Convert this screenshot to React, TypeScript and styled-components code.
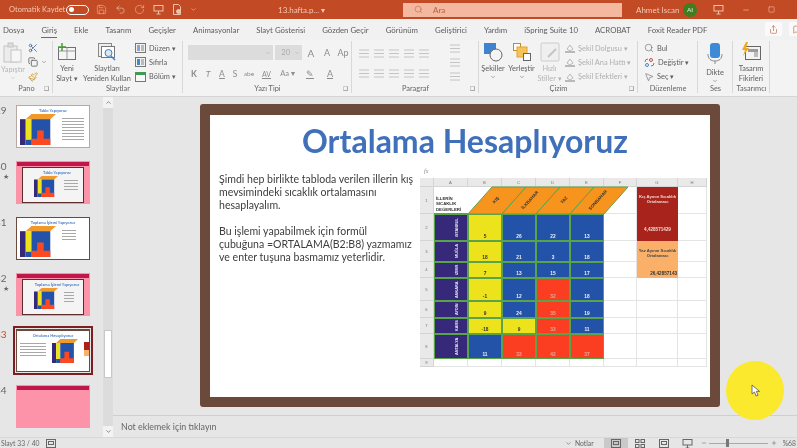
import styled, { createGlobalStyle } from "styled-components";
import {
  ChevronDown,
  ChevronUp,
  Copy,
  Minus,
  MessageSquare,
  MousePointer2,
  Paintbrush,
  Plus,
  RotateCw,
  Save,
  Scissors,
  Search,
  Share,
  Square,
  Undo2,
} from "lucide-react";

const GlobalStyle = createGlobalStyle`
  html, body { margin: 0; padding: 0; background: #e6e6e6; overflow: hidden; }
  * { box-sizing: border-box; }
`;

const Page = styled.div`
  position: relative;
  width: 797px;
  height: 448px;
  display: flex;
  flex-direction: column;
  overflow: hidden;
  font-family: Lato, "Noto Sans", sans-serif;
  color: #555;
  background: #e6e6e6;
  filter: blur(0.4px);
`;

/* ---------- title bar ---------- */
const TitleBar = styled.div`
  height: 19px;
  flex-shrink: 0;
  background: #c24b25;
  color: #f3c9b6;
  font-size: 8px;
  display: flex;
  align-items: center;
  padding-left: 9px;
  white-space: nowrap;
`;
const AutoSave = styled.span`
  width: 57px;
  font-size: 7.5px;
`;
const Toggle = styled.span`
  width: 23px;
  height: 10px;
  border: 1px solid #fff;
  border-radius: 6px;
  display: flex;
  align-items: center;
  padding-left: 2px;
  margin-right: 7px;
  &::before {
    content: "";
    width: 5px;
    height: 5px;
    border-radius: 50%;
    background: #fff;
  }
`;
const QuickIcons = styled.div`
  display: flex;
  align-items: center;
  gap: 8px;
  width: 182px;
  color: #f0c0a8;
`;
const FileName = styled.span`
  width: 125px;
`;
const SearchBox = styled.div`
  width: 219px;
  height: 14px;
  background: #f3b89f;
  color: #b5603f;
  display: flex;
  align-items: center;
  gap: 10px;
  padding-left: 11px;
`;
const UserName = styled.span`
  margin-left: 14px;
  width: 47px;
`;
const Avatar = styled.span`
  width: 14px;
  height: 14px;
  border-radius: 50%;
  background: #3f7d1f;
  color: #e5eed8;
  font-size: 6.5px;
  display: flex;
  align-items: center;
  justify-content: center;
  margin-right: 16px;
`;
const WindowIcons = styled.div`
  display: flex;
  align-items: center;
  gap: 18px;
  color: #f0c0a8;
`;

/* ---------- tabs ---------- */
const TabBar = styled.div`
  height: 21px;
  flex-shrink: 0;
  background: #f1f1f1;
  display: flex;
  align-items: center;
  gap: 17px;
  padding-left: 3px;
  position: relative;
`;
const Tab = styled.span<{ $active?: boolean }>`
  font-size: 7.8px;
  color: #5c5c5c;
  white-space: nowrap;
  padding: 3px 0 2px;
  border-bottom: 1px solid ${(p) => (p.$active ? "#c24b25" : "transparent")};
`;
const TabActions = styled.div`
  position: absolute;
  right: -9px;
  top: 3px;
  display: flex;
  gap: 7px;
  color: #c8775a;
`;
const TabAction = styled.span`
  width: 17px;
  height: 14px;
  background: #fafafa;
  display: flex;
  align-items: center;
  justify-content: center;
`;

/* ---------- ribbon ---------- */
const Ribbon = styled.div`
  height: 57px;
  flex-shrink: 0;
  background: #f3f3f3;
  border-bottom: 1px solid #d5d5d5;
  display: flex;
`;
const Group = styled.div<{ $w: number }>`
  width: ${(p) => p.$w}px;
  flex-shrink: 0;
  display: flex;
  flex-direction: column;
  position: relative;
  &::after {
    content: "";
    position: absolute;
    right: 0;
    top: 1px;
    bottom: 3px;
    width: 1px;
    background: #d8d8d8;
  }
`;
const GroupBody = styled.div`
  flex: 1;
  display: flex;
  min-height: 0;
`;
const GroupLabel = styled.div`
  height: 13px;
  font-size: 7.4px;
  color: #666;
  text-align: center;
  line-height: 11px;
  position: relative;
`;
const Launcher = styled.span`
  position: absolute;
  right: 4px;
  top: 3px;
  width: 5px;
  height: 5px;
  border: 1px solid #aaa;
  border-top-color: #ccc;
  border-left-color: #ccc;
`;
const BigButton = styled.div<{ $w: number; $off?: boolean }>`
  width: ${(p) => p.$w}px;
  flex-shrink: 0;
  display: flex;
  flex-direction: column;
  align-items: center;
  padding-top: 2px;
  font-size: 7.4px;
  line-height: 9.5px;
  text-align: center;
  color: ${(p) => (p.$off ? "#b5b5b5" : "#606060")};
  white-space: nowrap;
  svg {
    flex-shrink: 0;
  }
`;
const BigLabel = styled.span`
  margin-top: 2px;
`;
const SmallColumn = styled.div<{ $w?: number; $pad?: number }>`
  width: ${(p) => (p.$w ? `${p.$w}px` : "auto")};
  padding-left: ${(p) => p.$pad ?? 0}px;
  padding-top: 2px;
  display: flex;
  flex-direction: column;
  gap: 2px;
`;
const SmallRow = styled.div<{ $off?: boolean }>`
  height: 13px;
  display: flex;
  align-items: center;
  gap: 3px;
  font-size: 7.4px;
  white-space: nowrap;
  color: ${(p) => (p.$off ? "#b0b0b0" : "#606060")};
`;
const FontColumn = styled.div`
  display: flex;
  flex-direction: column;
  padding: 5px 0 0 5px;
  gap: 6px;
`;
const FontRow = styled.div`
  display: flex;
  align-items: center;
  gap: 2px;
  height: 15px;
  color: #8c8c8c;
  font-size: 8px;
`;
const Select = styled.div<{ $w: number }>`
  width: ${(p) => p.$w}px;
  height: 15px;
  background: #dcdcdc;
  color: #aaa;
  font-size: 7.5px;
  display: flex;
  align-items: center;
  justify-content: flex-end;
  gap: 4px;
  padding-right: 2px;
`;
const Glyph = styled.span<{ $w: number; $b?: boolean; $i?: boolean; $u?: boolean; $size?: number }>`
  width: ${(p) => p.$w}px;
  text-align: center;
  font-weight: ${(p) => (p.$b ? 700 : 400)};
  font-style: ${(p) => (p.$i ? "italic" : "normal")};
  text-decoration: ${(p) => (p.$u ? "underline" : "none")};
  font-size: ${(p) => p.$size ?? 8.5}px;
`;
const ParagraphColumn = styled.div`
  width: 86px;
  padding: 8px 0 0 7px;
  display: flex;
  flex-direction: column;
  gap: 9px;
`;
const IconLine = styled.div`
  display: flex;
  gap: 5px;
  height: 11px;
  align-items: center;
`;

/* ---------- main area ---------- */
const Main = styled.div`
  flex: 1;
  display: flex;
  min-height: 0;
`;
const ThumbPane = styled.div`
  width: 113px;
  flex-shrink: 0;
  display: flex;
  background: #e6e6e6;
`;
const ThumbList = styled.div`
  width: 103px;
  padding-top: 8px;
  display: flex;
  flex-direction: column;
  gap: 13px;
`;
const ThumbRow = styled.div`
  height: 43px;
  display: flex;
`;
const ThumbNumber = styled.div<{ $current?: boolean }>`
  width: 16px;
  flex-shrink: 0;
  overflow: hidden;
  font-size: 10px;
  line-height: 11px;
  color: ${(p) => (p.$current ? "#c24b25" : "#666")};
  white-space: nowrap;
  text-indent: -5px;
`;
const Star = styled.div`
  font-size: 7px;
  line-height: 8px;
  text-indent: 3px;
`;
const Thumb = styled.div<{ $bg: string; $border: string; $current?: boolean }>`
  width: 74px;
  height: 43px;
  flex-shrink: 0;
  background: ${(p) => p.$bg};
  border: 1px solid ${(p) => p.$border};
  border-top-width: ${(p) => (p.$current ? 2 : 1)}px;
  display: flex;
  flex-direction: column;
  align-items: center;
  overflow: hidden;
  outline: ${(p) => (p.$current ? "2px solid #7d1f22" : "none")};
  outline-offset: 1px;
`;
const PinkThumb = styled(Thumb)`
  justify-content: flex-start;
  gap: 1px;
`;
const InnerScreen = styled.div`
  width: 62px;
  height: 36px;
  background: #f4f4f4;
  border: 1px solid #5d2d2d;
  display: flex;
  flex-direction: column;
  align-items: center;
  padding-left: 8px;
`;
const ThumbTitle = styled.div`
  font-size: 4px;
  font-weight: 700;
  color: #4a7cc4;
  padding-top: 2px;
  line-height: 5px;
  white-space: nowrap;
`;
const ThumbBand = styled.div`
  width: 100%;
  height: 4px;
  flex-shrink: 0;
  background: #c2154a;
`;
const ThumbContent = styled.div`
  width: 100%;
  display: flex;
  align-items: flex-start;
  gap: 6px;
  padding: 1px 3px 0 3px;
`;
const ThumbLines = styled.div<{ $w: number; $h: number }>`
  width: ${(p) => p.$w}px;
  height: ${(p) => p.$h}px;
  margin-top: 4px;
  flex-shrink: 0;
  background: repeating-linear-gradient(#a8a8a8 0 1px, transparent 1px 3px);
`;
const ThumbSideBar = styled.div`
  width: 6px;
  height: 14px;
  margin-top: 3px;
  flex-shrink: 0;
  background: linear-gradient(#a8231c 55%, #fbb06a 55%);
`;
const ScrollBar = styled.div`
  width: 10px;
  background: #dcdcdc;
  display: flex;
  flex-direction: column;
  align-items: center;
  color: #444;
`;
const ScrollEnd = styled.div`
  width: 10px;
  height: 11px;
  background: #f3f3f3;
  display: flex;
  align-items: center;
  justify-content: center;
`;
const ScrollThumb = styled.div`
  width: 8px;
  height: 48px;
  background: #fff;
  border: 1px solid #c8c8c8;
  margin-top: auto;
  margin-bottom: 48px;
`;
const Workspace = styled.div`
  flex: 1;
  display: flex;
  flex-direction: column;
  min-width: 0;
`;
const Stage = styled.div`
  flex: 1;
  padding: 7px 0 0 87px;
`;
const Slide = styled.div`
  width: 520px;
  height: 303px;
  background: #fff;
  border: 10px solid #6b4a3c;
  border-top-width: 11px;
  border-radius: 3px;
  display: flex;
  flex-direction: column;
  overflow: hidden;
`;
const SlideTitle = styled.div`
  font-size: 32px;
  font-weight: 700;
  line-height: 34px;
  color: #3f70b9;
  text-align: center;
  padding: 9px 0 0 10px;
  white-space: nowrap;
`;
const SlideBody = styled.div`
  display: flex;
  padding: 9px 0 0 9px;
`;
const SlideText = styled.div`
  width: 201px;
  padding-top: 6px;
  font-size: 10.55px;
  line-height: 12.8px;
  color: #3d3d3d;
  flex-shrink: 0;
`;
const Paragraph = styled.p`
  margin: 0 0 14px;
  white-space: nowrap;
`;

/* ---------- embedded spreadsheet ---------- */
const SheetWrap = styled.div`
  display: flex;
  flex-direction: column;
  width: 287px;
`;
const Fx = styled.div`
  height: 11px;
  font-size: 6px;
  font-style: italic;
  color: #888;
  padding-left: 4px;
  line-height: 9px;
  font-family: "Liberation Serif", serif;
`;
const Sheet = styled.div`
  position: relative;
  display: grid;
  grid-template-columns: 14px 34px 34px 34px 34px 34px 33px 41px 29px;
  grid-template-rows: 9px 27px 27px 21px 16px 23px 17px 16px 25px 8px;
  font-family: "Liberation Sans", Arial, sans-serif;
  font-size: 4.2px;
`;
const HeadCell = styled.div`
  background: #e9e9e9;
  border-right: 1px solid #d4d4d4;
  border-bottom: 1px solid #d4d4d4;
  color: #777;
  display: flex;
  align-items: center;
  justify-content: center;
`;
const Blank = styled.div`
  border-right: 1px solid #e4e4e4;
  border-bottom: 1px solid #e4e4e4;
`;
const TitleCell = styled.div`
  border-bottom: 1px solid #5aa34a;
  font-weight: 700;
  font-size: 4.3px;
  line-height: 5.5px;
  color: #333;
  display: flex;
  align-items: flex-end;
  padding: 0 0 1px 2px;
`;
const CityCell = styled.div`
  background: #37297a;
  border: 1px solid #5aa34a;
  color: #e8e8f5;
  font-weight: 700;
  font-size: 3.8px;
  display: flex;
  align-items: flex-end;
  justify-content: center;
  writing-mode: vertical-rl;
  transform: rotate(180deg);
  padding-left: 8px;
  white-space: nowrap;
`;
const ValueCell = styled.div<{ $tone: "yellow" | "blue" | "red" }>`
  background: ${(p) => (p.$tone === "yellow" ? "#ece31c" : p.$tone === "blue" ? "#2353a8" : "#fb3e22")};
  color: ${(p) => (p.$tone === "yellow" ? "#333" : p.$tone === "blue" ? "#f1f1f1" : "#e8a898")};
  border: 1px solid #5aa34a;
  font-weight: 700;
  font-size: 4.8px;
  display: flex;
  align-items: flex-end;
  justify-content: center;
  padding-bottom: 1px;
`;
const AverageCell = styled.div<{ $bg: string; $fg: string; $align: string; $justify: string }>`
  background: ${(p) => p.$bg};
  color: ${(p) => p.$fg};
  font-weight: 700;
  font-size: 4.6px;
  line-height: 5.4px;
  text-align: center;
  white-space: nowrap;
  display: flex;
  align-items: ${(p) => p.$align};
  justify-content: ${(p) => p.$justify};
  padding: 7px 1px 2px;
`;
const AverageLabel = styled.span`
  font-size: 4.2px;
`;
const HeaderOverlay = styled.svg`
  position: absolute;
  left: 48px;
  top: 9px;
  width: 170px;
  height: 27px;
  overflow: visible;
`;

/* ---------- notes + status ---------- */
const Notes = styled.div`
  height: 22px;
  flex-shrink: 0;
  border-top: 1px solid #cfcfcf;
  font-size: 8.9px;
  color: #666;
  padding-left: 8px;
  display: flex;
  align-items: center;
`;
const StatusBar = styled.div`
  height: 11px;
  flex-shrink: 0;
  background: #e6e6e6;
  border-top: 1px solid #d8d8d8;
  display: flex;
  align-items: center;
  font-size: 6.8px;
  color: #666;
  padding-left: 1px;
`;
const StatusLeft = styled.span`
  width: 45px;
  white-space: nowrap;
`;
const StatusRight = styled.div`
  margin-left: auto;
  display: flex;
  align-items: center;
  height: 100%;
`;
const NotesToggle = styled.span`
  display: flex;
  align-items: center;
  gap: 3px;
  margin-right: 10px;
`;
const ViewButton = styled.span<{ $active?: boolean }>`
  width: 24px;
  height: 100%;
  background: ${(p) => (p.$active ? "#c9c9c9" : "transparent")};
  display: flex;
  align-items: center;
  justify-content: center;
`;
const Zoomer = styled.div`
  display: flex;
  align-items: center;
  margin-left: 1px;
  gap: 2px;
  padding-right: 1px;
`;
const ZoomTrack = styled.span`
  width: 59px;
  height: 1px;
  background: #aaa;
  display: flex;
  align-items: center;
  justify-content: center;
  margin-right: 1px;
  &::before {
    content: "";
    width: 3px;
    height: 8px;
    background: #777;
    margin-right: 22px;
  }
`;
const ZoomValue = styled.span`
  margin-left: 4px;
  white-space: nowrap;
`;
const CursorSpot = styled.div`
  position: absolute;
  left: 726px;
  top: 361px;
  width: 58px;
  height: 59px;
  border-radius: 50%;
  background: #fbe92e;
  display: flex;
  align-items: center;
  justify-content: center;
`;

/* ---------- icons ---------- */
const ClipboardIcon = () => (
  <svg width="20" height="21" viewBox="0 0 20 21" fill="none">
    <rect x="1" y="4" width="13" height="16" fill="#ececec" stroke="#c4c4c4" />
    <rect x="5" y="1" width="5" height="4" fill="#ddd" stroke="#c4c4c4" />
    <rect x="8" y="8" width="10" height="12" fill="#f6f6f6" stroke="#c4c4c4" />
  </svg>
);
const NewSlideIcon = () => (
  <svg width="20" height="20" viewBox="0 0 20 20" fill="none">
    <rect x="1.500" y="5.500" width="17" height="12" fill="#f5f5f5" stroke="#707070" />
    <path d="M1.500 9h17M10 5.500v12" stroke="#999" />
    <path d="M5 1v8M1 5h8" stroke="#4c9a3c" strokeWidth="1.500" />
  </svg>
);
const ReuseIcon = () => (
  <svg width="21" height="20" viewBox="0 0 21 20" fill="none">
    <rect x="1.500" y="1.500" width="13" height="13" fill="#eee" stroke="#888" />
    <rect x="4.500" y="4.500" width="13" height="11" fill="#fff" stroke="#777" />
    <circle cx="11.500" cy="11" r="3.500" fill="#dbe9f7" stroke="#3c7fbf" />
    <path d="M14 14l4 4" stroke="#3c7fbf" strokeWidth="1.500" />
  </svg>
);
const LayoutIcon = ({ accent }: { accent: string }) => (
  <svg width="11" height="10" viewBox="0 0 11 10" fill="none">
    <rect x=".5" y=".5" width="10" height="9" fill="#f2f2f2" stroke="#777" />
    <rect x="2" y="2" width="3" height="6" fill={accent} />
    <rect x="6" y="2" width="3" height="6" fill="#bbb" />
  </svg>
);
const SectionIcon = () => (
  <svg width="11" height="10" viewBox="0 0 11 10" fill="none">
    <rect x=".5" y=".5" width="10" height="9" fill="#f8f8f8" stroke="#777" />
    <rect x="0" y="0" width="11" height="3" fill="#3f9a55" />
  </svg>
);
const ListIcon = ({ w = 10 }: { w?: number }) => (
  <svg width={w} height="9" viewBox="0 0 10 9" stroke="#c4c4c4" fill="none">
    <path d="M0 1h10M0 4.500h10M0 8h10" />
  </svg>
);
const ShapesIcon = () => (
  <svg width="20" height="20" viewBox="0 0 20 20" fill="none">
    <rect x="1" y="1" width="12" height="11" fill="#3f82d0" />
    <circle cx="13" cy="13" r="6" fill="#f4f4f4" stroke="#666" />
  </svg>
);
const ArrangeIcon = () => (
  <svg width="20" height="20" viewBox="0 0 20 20" fill="none">
    <rect x="1.500" y="1.500" width="7" height="7" fill="#fff" stroke="#c78a1d" />
    <rect x="5" y="5" width="10" height="10" fill="#f6c25a" stroke="#e2a431" />
    <rect x="11.500" y="11.500" width="7" height="7" fill="#fff" stroke="#666" />
  </svg>
);
const QuickStyleIcon = () => (
  <svg width="20" height="20" viewBox="0 0 20 20" fill="none">
    <rect x="1" y="1" width="18" height="18" rx="1" fill="#efefef" stroke="#cccccc" />
    <path d="M8 15l8-8" stroke="#c4c4c4" strokeWidth="2" />
  </svg>
);
const FillIcon = ({ color }: { color: string }) => (
  <svg width="10" height="10" viewBox="0 0 10 10" fill="none">
    <path d="M2 6l3-4 3 4-3 2z" stroke={color} fill="none" />
    <rect x="0" y="8" width="10" height="2" fill={color} />
  </svg>
);
const ReplaceIcon = () => (
  <svg width="11" height="11" viewBox="0 0 11 11" fill="none">
    <path d="M1 5a3 3 0 0 1 3-3" stroke="#4b86c6" />
    <path d="M10 6a3 3 0 0 1-3 3" stroke="#4b86c6" />
    <circle cx="7" cy="3" r="1.500" stroke="#c0504d" />
    <circle cx="3" cy="8" r="1.500" stroke="#4b86c6" />
  </svg>
);
const MicIcon = () => (
  <svg width="18" height="24" viewBox="0 0 18 24" fill="none">
    <rect x="4" y="1" width="10" height="15" rx="3" fill="#3d8bd8" />
    <path d="M2 12c0 5 3 7 7 7s7-2 7-7M9 19v3" stroke="#888" />
  </svg>
);
const IdeasIcon = () => (
  <svg width="22" height="20" viewBox="0 0 22 20" fill="none">
    <rect x="5.500" y="4.500" width="15" height="13" fill="#f3f3f3" stroke="#666" />
    <rect x="8" y="7" width="10" height="3" fill="#9a9a9a" />
    <rect x="14" y="10" width="4" height="5" fill="#bcbcbc" />
    <path d="M6 0L2 8h3l-2 6 6-8H6l2-6z" fill="#f0a81e" />
  </svg>
);
const PresentIcon = () => (
  <svg width="11" height="11" viewBox="0 0 11 11" fill="none" stroke="currentColor">
    <rect x="1" y="1.500" width="9" height="5.500" />
    <path d="M5.500 7v3M3.500 10h4" />
  </svg>
);
const PageIcon = () => (
  <svg width="10" height="11" viewBox="0 0 10 11" fill="none" stroke="currentColor">
    <path d="M1.500.500h5l2 2v8h-7z" />
    <circle cx="6.500" cy="7.500" r="2" fill="currentColor" />
  </svg>
);
const GridViewIcon = () => (
  <svg width="10" height="9" viewBox="0 0 10 9" fill="none" stroke="#666">
    <rect x=".5" y=".5" width="3.500" height="3" />
    <rect x="6" y=".5" width="3.500" height="3" />
    <rect x=".5" y="5.500" width="3.500" height="3" />
    <rect x="6" y="5.500" width="3.500" height="3" />
  </svg>
);
const NormalViewIcon = () => (
  <svg width="10" height="9" viewBox="0 0 10 9" fill="none" stroke="#666">
    <rect x=".5" y=".5" width="9" height="8" />
    <rect x="2.500" y="2.500" width="5" height="3" />
  </svg>
);
const MiniTable = ({ w, h }: { w: number; h: number }) => (
  <svg width={w} height={h} viewBox="0 0 44 30" preserveAspectRatio="none" style={{ flexShrink: 0 }}>
    <path d="M7 5L14 0h30l-7 5z" fill="#ef9a2c" />
    <rect x="0" y="5" width="7" height="25" fill="#37297a" />
    <rect x="7" y="5" width="7" height="25" fill="#ece31c" />
    <rect x="14" y="5" width="23" height="25" fill="#2353a8" />
    <rect x="7" y="25" width="7" height="5" fill="#2353a8" />
    <path d="M14 30v-6h7v-8h8v8h8v6z" fill="#fb4a22" />
  </svg>
);

/* ---------- data ---------- */
const columns = ["A", "B", "C", "D", "E", "F", "G", "H"];
type Tone = "yellow" | "blue" | "red";
const rows: { city: string; values: [string, Tone][] }[] = [
  { city: "İSTANBUL", values: [["5", "yellow"], ["26", "blue"], ["22", "blue"], ["13", "blue"]] },
  { city: "MUĞLA", values: [["18", "yellow"], ["21", "blue"], ["3", "blue"], ["18", "blue"]] },
  { city: "İZMİR", values: [["7", "yellow"], ["13", "blue"], ["15", "blue"], ["17", "blue"]] },
  { city: "ANKARA", values: [["-1", "yellow"], ["12", "blue"], ["32", "red"], ["18", "blue"]] },
  { city: "AYDIN", values: [["9", "yellow"], ["24", "blue"], ["35", "red"], ["19", "blue"]] },
  { city: "KARS", values: [["-18", "yellow"], ["9", "yellow"], ["33", "red"], ["11", "blue"]] },
  { city: "ANTALYA", values: [["11", "blue"], ["33", "red"], ["42", "red"], ["37", "red"]] },
];
const seasons = ["KIŞ", "İLKBAHAR", "YAZ", "SONBAHAR"];
const tabs = [
  "Dosya", "Giriş", "Ekle", "Tasarım", "Geçişler", "Animasyonlar", "Slayt Gösterisi",
  "Gözden Geçir", "Görünüm", "Geliştirici", "Yardım", "iSpring Suite 10", "ACROBAT", "Foxit Reader PDF",
];
type ThumbInfo = {
  n: string;
  title?: string;
  pink?: boolean;
  current?: boolean;
  empty?: boolean;
  framed?: boolean;
  lines?: number;
};
const thumbs: ThumbInfo[] = [
  { n: "29", title: "Tablo Yapıyoruz", lines: 22 },
  { n: "30", title: "Tablo Yapıyoruz", pink: true, lines: 14 },
  { n: "31", title: "Toplama İşlemi Yapıyoruz", framed: true, lines: 14 },
  { n: "32", title: "Toplama İşlemi Yapıyoruz", pink: true, lines: 10 },
  { n: "33", title: "Ortalama Hesaplıyoruz", current: true },
  { n: "34", empty: true },
];

const Thumbnail = ({ t }: { t: ThumbInfo }) => {
  if (t.empty) {
    return (
      <Thumb $bg="#fc93a8" $border="#fc93a8">
        <ThumbBand />
      </Thumb>
    );
  }
  if (t.pink) {
    return (
      <PinkThumb $bg="#fc93a8" $border="#fc93a8">
        <ThumbBand />
        <InnerScreen>
          <ThumbTitle>{t.title}</ThumbTitle>
          <ThumbContent>
            <MiniTable w={24} h={21} />
            <ThumbLines $w={t.lines ?? 10} $h={10} />
          </ThumbContent>
        </InnerScreen>
      </PinkThumb>
    );
  }
  if (t.current) {
    return (
      <Thumb $bg="#fff" $border="#6b4a3c" $current>
        <ThumbTitle>{t.title}</ThumbTitle>
        <ThumbContent>
          <ThumbLines $w={26} $h={14} />
          <MiniTable w={26} h={24} />
          <ThumbSideBar />
        </ThumbContent>
      </Thumb>
    );
  }
  return (
    <Thumb $bg="#fff" $border={t.framed ? "#6b4a3c" : "#b8a8a0"}>
      <ThumbTitle>{t.title}</ThumbTitle>
      <ThumbContent>
        <MiniTable w={36} h={31} />
        <ThumbLines $w={t.lines ?? 20} $h={t.framed ? 10 : 24} />
      </ThumbContent>
    </Thumb>
  );
};

const RowCells = ({ row, index }: { row: (typeof rows)[number]; index: number }) => (
  <>
    <HeadCell>{index + 2}</HeadCell>
    <CityCell>{row.city}</CityCell>
    {row.values.map(([value, tone], i) => (
      <ValueCell key={i} $tone={tone}>
        {value}
      </ValueCell>
    ))}
    <Blank />
    {index === 0 && (
      <AverageCell $bg="#a8231c" $fg="#f2d6cf" $align="center" $justify="center">
        4,428571429
      </AverageCell>
    )}
    {index === 1 && (
      <AverageCell $bg="#fbb06a" $fg="#444" $align="flex-start" $justify="center">
        <AverageLabel>
          Yaz Ayının Sıcaklık
          <br />
          Ortalaması
        </AverageLabel>
      </AverageCell>
    )}
    {index === 2 && (
      <AverageCell $bg="#fbb06a" $fg="#333" $align="flex-end" $justify="flex-end">
        26,42857143
      </AverageCell>
    )}
    {index > 2 && <Blank />}
    <Blank />
  </>
);

const App = () => {
  return (
    <Page>
      <GlobalStyle />
      <TitleBar>
        <AutoSave>Otomatik Kaydet</AutoSave>
        <Toggle />
        <QuickIcons>
          <Save size={11} strokeWidth={1.2} />
          <Undo2 size={11} strokeWidth={1.4} />
          <RotateCw size={11} strokeWidth={1.2} />
          <PresentIcon />
          <PageIcon />
          <ChevronDown size={7} />
        </QuickIcons>
        <FileName>13.hafta.p... ▾</FileName>
        <SearchBox>
          <Search size={9} strokeWidth={1.4} />
          <span>Ara</span>
        </SearchBox>
        <UserName>Ahmet Iscan</UserName>
        <Avatar>AI</Avatar>
        <WindowIcons>
          <PresentIcon />
          <Minus size={8} />
          <Square size={7} />
        </WindowIcons>
      </TitleBar>

      <TabBar>
        {tabs.map((tab) => (
          <Tab key={tab} $active={tab === "Giriş"}>
            {tab}
          </Tab>
        ))}
        <TabActions>
          <TabAction>
            <Share size={9} />
          </TabAction>
          <TabAction>
            <MessageSquare size={9} />
          </TabAction>
        </TabActions>
      </TabBar>

      <Ribbon>
        <Group $w={53}>
          <GroupBody>
            <BigButton $w={26} $off>
              <ClipboardIcon />
              <BigLabel>Yapıştır</BigLabel>
              <ChevronDown size={6} />
            </BigButton>
            <SmallColumn $pad={2}>
              <SmallRow>
                <Scissors size={10} color="#4a6a9a" />
              </SmallRow>
              <SmallRow>
                <Copy size={10} />
                <ChevronDown size={6} />
              </SmallRow>
              <SmallRow>
                <Paintbrush size={10} color="#d29a2a" />
              </SmallRow>
            </SmallColumn>
          </GroupBody>
          <GroupLabel>
            Pano
            <Launcher />
          </GroupLabel>
        </Group>

        <Group $w={130}>
          <GroupBody>
            <BigButton $w={28}>
              <NewSlideIcon />
              <BigLabel>
                Yeni
                <br />
                Slayt ▾
              </BigLabel>
            </BigButton>
            <BigButton $w={52}>
              <ReuseIcon />
              <BigLabel>
                Slaytları
                <br />
                Yeniden Kullan
              </BigLabel>
            </BigButton>
            <SmallColumn $pad={2}>
              <SmallRow>
                <LayoutIcon accent="#8aa6c8" />
                Düzen ▾
              </SmallRow>
              <SmallRow>
                <LayoutIcon accent="#3c8ecb" />
                Sıfırla
              </SmallRow>
              <SmallRow>
                <SectionIcon />
                Bölüm ▾
              </SmallRow>
            </SmallColumn>
          </GroupBody>
          <GroupLabel>Slaytlar</GroupLabel>
        </Group>

        <Group $w={169}>
          <GroupBody>
            <FontColumn>
              <FontRow>
                <Select $w={85}>
                  <ChevronDown size={6} />
                </Select>
                <Select $w={27}>
                  20 <ChevronDown size={6} />
                </Select>
                <Glyph $w={14} $size={10}>
                  A
                </Glyph>
                <Glyph $w={14} $size={9}>
                  A
                </Glyph>
                <Glyph $w={14} $size={9}>
                  Ap
                </Glyph>
              </FontRow>
              <FontRow>
                <Glyph $w={12} $b>
                  K
                </Glyph>
                <Glyph $w={12} $i>
                  T
                </Glyph>
                <Glyph $w={12} $u>
                  A
                </Glyph>
                <Glyph $w={10}>S</Glyph>
                <Glyph $w={14} $size={6.5}>
                  abe
                </Glyph>
                <Glyph $w={17} $size={7} $u>
                  AV
                </Glyph>
                <Glyph $w={21} $size={7.5}>
                  Aa ▾
                </Glyph>
                <Glyph $w={20} $size={9} $u>
                  ✎
                </Glyph>
                <Glyph $w={16} $size={9} $u>
                  A
                </Glyph>
              </FontRow>
            </FontColumn>
          </GroupBody>
          <GroupLabel>
            Yazı Tipi
            <Launcher />
          </GroupLabel>
        </Group>

        <Group $w={127}>
          <GroupBody>
            <ParagraphColumn>
              <IconLine>
                <ListIcon />
                <ListIcon />
                <ListIcon />
                <ListIcon />
                <ListIcon />
              </IconLine>
              <IconLine>
                <ListIcon />
                <ListIcon />
                <ListIcon />
                <ListIcon />
                <ListIcon />
              </IconLine>
            </ParagraphColumn>
            <SmallColumn $pad={12}>
              <SmallRow $off>
                <ListIcon />
              </SmallRow>
              <SmallRow $off>
                <ListIcon />
              </SmallRow>
              <SmallRow $off>
                <ListIcon />
              </SmallRow>
            </SmallColumn>
          </GroupBody>
          <GroupLabel>
            Paragraf
            <Launcher />
          </GroupLabel>
        </Group>

        <Group $w={159}>
          <GroupBody>
            <BigButton $w={28}>
              <ShapesIcon />
              <BigLabel>Şekiller</BigLabel>
              <ChevronDown size={6} />
            </BigButton>
            <BigButton $w={29}>
              <ArrangeIcon />
              <BigLabel>Yerleştir</BigLabel>
              <ChevronDown size={6} />
            </BigButton>
            <BigButton $w={27} $off>
              <QuickStyleIcon />
              <BigLabel>
                Hızlı
                <br />
                Stiller ▾
              </BigLabel>
            </BigButton>
            <SmallColumn $pad={2}>
              <SmallRow $off>
                <FillIcon color="#b9b9b9" />
                Şekil Dolgusu ▾
              </SmallRow>
              <SmallRow $off>
                <FillIcon color="#b9b9b9" />
                Şekil Ana Hattı ▾
              </SmallRow>
              <SmallRow $off>
                <FillIcon color="#b9b9b9" />
                Şekil Efektleri ▾
              </SmallRow>
            </SmallColumn>
          </GroupBody>
          <GroupLabel>
            Çizim
            <Launcher />
          </GroupLabel>
        </Group>

        <Group $w={60}>
          <GroupBody>
            <SmallColumn $pad={6}>
              <SmallRow>
                <Search size={10} strokeWidth={1.4} />
                Bul
              </SmallRow>
              <SmallRow>
                <ReplaceIcon />
                Değiştir ▾
              </SmallRow>
              <SmallRow>
                <MousePointer2 size={10} strokeWidth={1.4} />
                Seç ▾
              </SmallRow>
            </SmallColumn>
          </GroupBody>
          <GroupLabel>Düzenleme</GroupLabel>
        </Group>

        <Group $w={35}>
          <GroupBody>
            <BigButton $w={34}>
              <MicIcon />
              <BigLabel>Dikte</BigLabel>
              <ChevronDown size={6} />
            </BigButton>
          </GroupBody>
          <GroupLabel>Ses</GroupLabel>
        </Group>

        <Group $w={37}>
          <GroupBody>
            <BigButton $w={36}>
              <IdeasIcon />
              <BigLabel>
                Tasarım
                <br />
                Fikirleri
              </BigLabel>
            </BigButton>
          </GroupBody>
          <GroupLabel>Tasarımcı</GroupLabel>
        </Group>
      </Ribbon>

      <Main>
        <ThumbPane>
          <ThumbList>
            {thumbs.map((t) => (
              <ThumbRow key={t.n}>
                <ThumbNumber $current={t.current}>
                  {t.n}
                  {t.pink && <Star>★</Star>}
                </ThumbNumber>
                <Thumbnail t={t} />
              </ThumbRow>
            ))}
          </ThumbList>
          <ScrollBar>
            <ScrollEnd>
              <ChevronUp size={7} />
            </ScrollEnd>
            <ScrollThumb />
            <ScrollEnd>
              <ChevronDown size={7} />
            </ScrollEnd>
          </ScrollBar>
        </ThumbPane>

        <Workspace>
          <Stage>
            <Slide>
              <SlideTitle>Ortalama Hesaplıyoruz</SlideTitle>
              <SlideBody>
                <SlideText>
                  <Paragraph>
                    Şimdi hep birlikte tabloda verilen illerin kış
                    <br />
                    mevsimindeki sıcaklık ortalamasını
                    <br />
                    hesaplayalım.
                  </Paragraph>
                  <Paragraph>
                    Bu işlemi yapabilmek için formül
                    <br />
                    çubuğuna =ORTALAMA(B2:B8) yazmamız
                    <br />
                    ve enter tuşuna basmamız yeterlidir.
                  </Paragraph>
                </SlideText>
                <SheetWrap>
                  <Fx>fx</Fx>
                  <Sheet>
                    <HeadCell />
                    {columns.map((c) => (
                      <HeadCell key={c}>{c}</HeadCell>
                    ))}

                    <HeadCell>1</HeadCell>
                    <TitleCell>
                      İLLERİN
                      <br />
                      SICAKLIK
                      <br />
                      DEĞERLERİ
                    </TitleCell>
                    <Blank />
                    <Blank />
                    <Blank />
                    <Blank />
                    <Blank />
                    <AverageCell $bg="#a8231c" $fg="#f2d6cf" $align="flex-start" $justify="center">
                      <AverageLabel>
                        Kış Ayının Sıcaklık
                        <br />
                        Ortalaması
                      </AverageLabel>
                    </AverageCell>
                    <Blank />

                    {rows.map((row, i) => (
                      <RowCells key={row.city} row={row} index={i} />
                    ))}

                    <HeadCell>9</HeadCell>
                    {columns.map((c) => (
                      <Blank key={c} />
                    ))}

                    <HeaderOverlay viewBox="0 0 170 27">
                      {seasons.map((s, i) => (
                        <g key={s}>
                          <path
                            d={`M${i * 34} 27 L${i * 34 + 24} 0 L${i * 34 + 58} 0 L${i * 34 + 34} 27 Z`}
                            fill="#f7941e"
                            stroke="#5aa34a"
                          />
                          <text
                            x={0}
                            y={0}
                            fontSize="4.4"
                            fontWeight="700"
                            fill="#333"
                            textAnchor="middle"
                            fontFamily="Liberation Sans, sans-serif"
                            transform={`translate(${i * 34 + 29} 14) rotate(-48)`}
                          >
                            {s}
                          </text>
                        </g>
                      ))}
                    </HeaderOverlay>
                  </Sheet>
                </SheetWrap>
              </SlideBody>
            </Slide>
          </Stage>
          <Notes>Not eklemek için tıklayın</Notes>
        </Workspace>
      </Main>

      <StatusBar>
        <StatusLeft>Slayt 33 / 40</StatusLeft>
        <NormalViewIcon />
        <StatusRight>
          <NotesToggle>
            <ChevronDown size={7} />
            Notlar
          </NotesToggle>
          <ViewButton $active>
            <NormalViewIcon />
          </ViewButton>
          <ViewButton>
            <GridViewIcon />
          </ViewButton>
          <ViewButton>
            <NormalViewIcon />
          </ViewButton>
          <ViewButton>
            <PresentIcon />
          </ViewButton>
          <Zoomer>
            <Minus size={6} />
            <ZoomTrack />
            <Plus size={6} />
            <ZoomValue>%68</ZoomValue>
          </Zoomer>
        </StatusRight>
      </StatusBar>

      <CursorSpot>
        <svg width="9" height="13" viewBox="0 0 9 13">
          <path d="M1 1v9l2.500-2 1.500 4 2-.8-1.600-3.800H8.500z" fill="#fff" stroke="#555" strokeWidth=".8" />
        </svg>
      </CursorSpot>
    </Page>
  );
};

export default App;
